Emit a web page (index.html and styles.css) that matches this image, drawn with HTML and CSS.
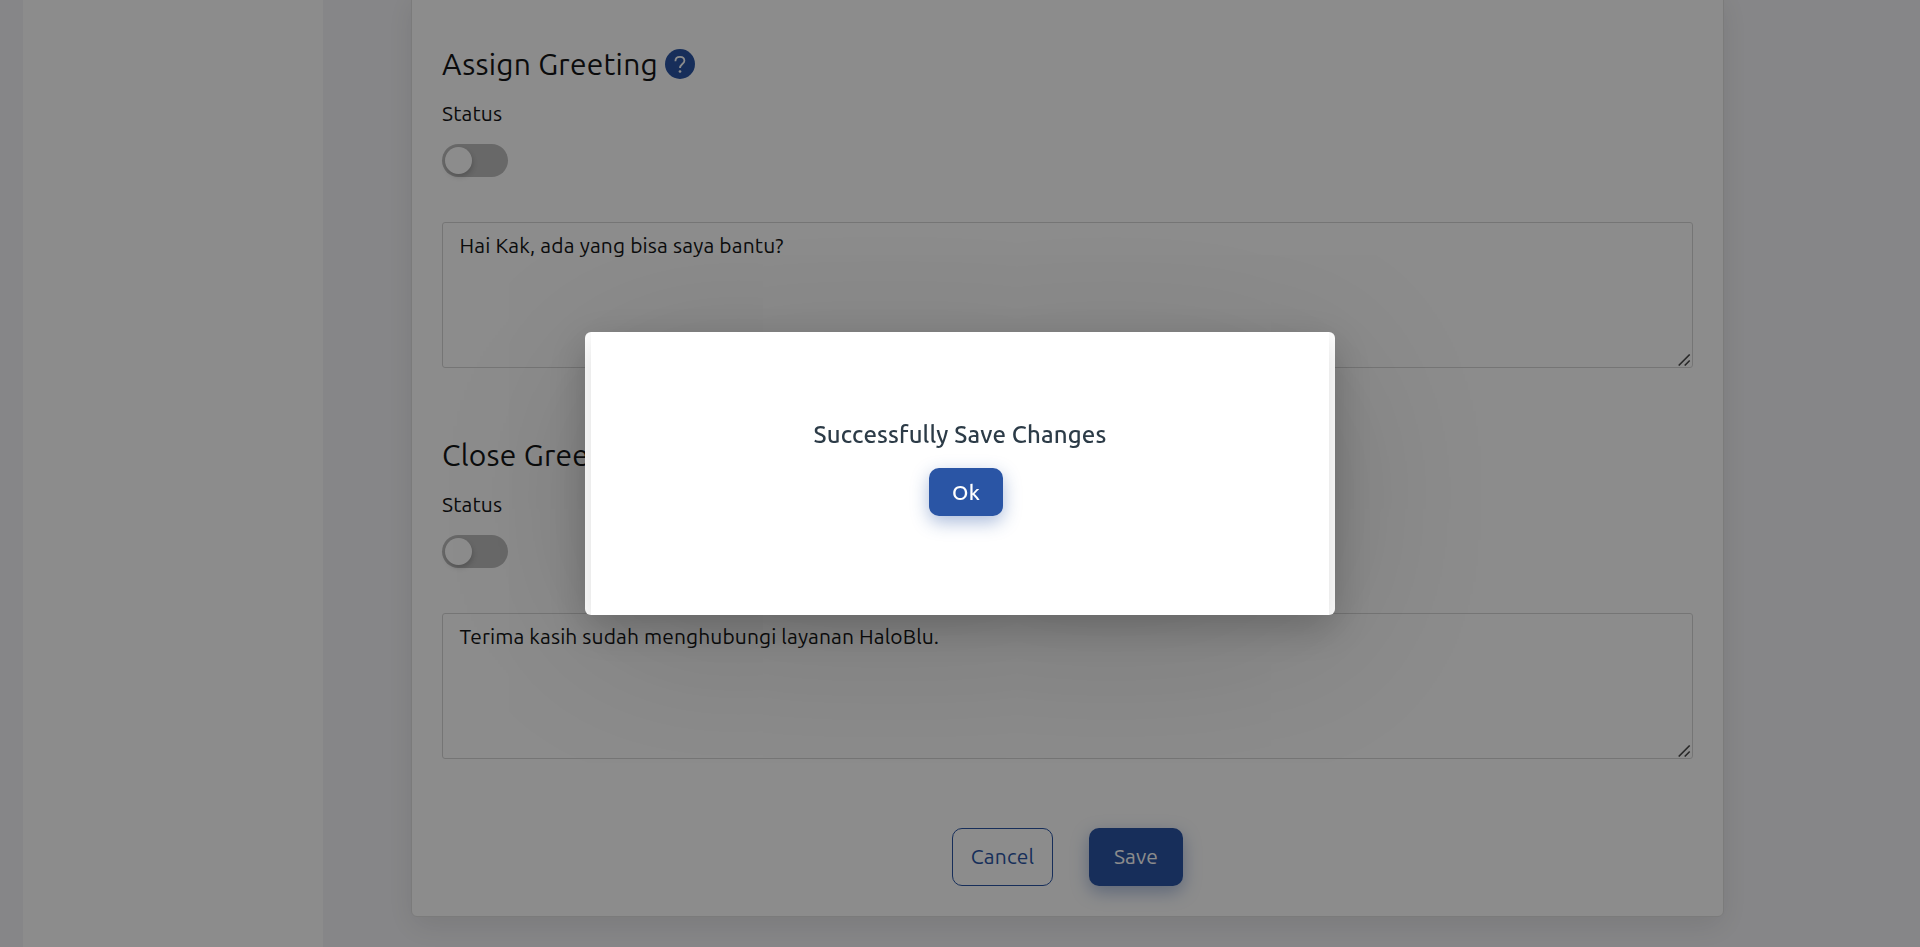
FILE: index.html
```html
<!DOCTYPE html>
<html lang="id">
<head>
<meta charset="utf-8">
<title>Greeting Settings</title>
<link rel="stylesheet" href="styles.css">
</head>
<body>
<div class="page">
  <aside class="sidebar"></aside>
  <main class="card">
    <section class="greeting">
      <h2 class="heading"><span class="heading-text">Assign Greeting</span>
        <svg class="help" viewBox="0 0 30 30"><circle cx="15" cy="15" r="15" fill="#2a55a5"/><path d="M10.4 12.2C10.4 9.4 12.2 7.9 15 7.9s4.4 1.6 4.4 3.8c0 3.2-4.4 3.5-4.4 7.3" fill="none" stroke="#fff" stroke-width="1.8"/><circle cx="15" cy="22.5" r="1.35" fill="#fff"/></svg>
      </h2>
      <span class="label">Status</span>
      <div class="toggle"><span class="knob"></span></div>
      <div class="field">
        <textarea class="message hello">Hai Kak, ada yang bisa saya bantu?</textarea>
        <svg class="grip" viewBox="0 0 13 12"><path d="M.7 11.5 11.7.5M6.7 11.5l5-5" stroke="#4a4a4a" stroke-width="1.6"/></svg>
      </div>
    </section>
    <section class="greeting">
      <h2 class="heading"><span class="heading-text">Close Greeting</span></h2>
      <span class="label">Status</span>
      <div class="toggle"><span class="knob"></span></div>
      <div class="field">
        <textarea class="message bye">Terima kasih sudah menghubungi layanan HaloBlu.</textarea>
        <svg class="grip" viewBox="0 0 13 12"><path d="M.7 11.5 11.7.5M6.7 11.5l5-5" stroke="#4a4a4a" stroke-width="1.6"/></svg>
      </div>
    </section>
    <div class="actions">
      <button class="btn cancel">Cancel</button>
      <button class="btn save">Save</button>
    </div>
  </main>
</div>
<div class="overlay">
  <div class="dialog">
    <div class="dialog-body">
      <p class="dialog-title">Successfully Save Changes</p>
      <button class="btn ok">Ok</button>
    </div>
  </div>
</div>
</body>
</html>
```
FILE: styles.css
```css
* { box-sizing: border-box; }
body { margin: 0; height: 947px; overflow: hidden; background: #f5f5f8; color: #141516; font-family: Ubuntu, "Noto Sans", sans-serif; font-size: 21px; letter-spacing: .15px; }
.page { display: flex; height: 947px; padding-left: 23px; }
.sidebar { width: 300px; background: #fff; }
.card { width: 1313px; height: 927px; margin: -10px 0 0 88px; padding: 54px 30px 0; background: #fff; border: 1px solid #e0e0e0; border-radius: 6px; box-shadow: 0 10px 30px rgba(0, 0, 0, .09); }
.greeting { height: 391px; display: flex; flex-direction: column; align-items: flex-start; }
.heading { display: flex; align-items: center; gap: 7px; height: 38px; margin: 0; font-size: 30px; font-weight: 400; line-height: 38px; letter-spacing: .25px; }
.heading-text { white-space: nowrap; }
.help { width: 30px; height: 30px; }
.label { height: 28px; margin-top: 16px; line-height: 28px; }
.toggle { width: 66px; height: 33px; margin-top: 17px; padding: 3px; border-radius: 17px; background: #bdbdbd; }
.knob { display: block; width: 27px; height: 27px; border-radius: 50%; background: #fff; box-shadow: 1px 3px 5px rgba(0, 0, 0, .18); }
.field { position: relative; margin-top: 45px; }
.grip { position: absolute; right: 2px; bottom: 2px; width: 13px; height: 12px; }
.message { display: block; width: 1251px; height: 146px; margin: 0; padding: 8px 16.5px; border: 1px solid #d6d6d6; border-radius: 3px; background: transparent; color: #141516; font: inherit; line-height: 28px; letter-spacing: .15px; resize: none; outline: 0; }
.bye { letter-spacing: .11px; }
.actions { display: flex; justify-content: center; gap: 36px; margin-top: 1px; }
.btn { padding: 0; border: 0; border-radius: 10px; background: #2a55a5; color: #fff; font: inherit; letter-spacing: .15px; box-shadow: 0 6px 18px rgba(42, 85, 165, .4); }
.cancel { width: 101px; height: 58px; padding-bottom: 2px; border: 1px solid #2a55a5; background: transparent; color: #2a55a5; box-shadow: none; }
.save { width: 94px; height: 58px; padding-bottom: 2px; }
.overlay { position: fixed; inset: 0; display: flex; align-items: center; justify-content: center; background: rgba(0, 0, 0, .45); }
.dialog { width: 750px; height: 283px; padding: 0 6px; border-radius: 6px; overflow: hidden; background: #fff; box-shadow: 0 12px 40px rgba(0, 0, 0, .22), 0 24px 190px rgba(0, 0, 0, .16); }
.dialog-body { height: 283px; padding-top: 86px; display: flex; flex-direction: column; align-items: center; background: #fff; box-shadow: 0 10px 30px rgba(0, 0, 0, .15); }
.dialog-title { margin: 0; height: 34px; color: #2c3b47; font-size: 24px; font-weight: 500; line-height: 34px; white-space: nowrap; }
.ok { width: 74px; height: 48px; margin: 16px 0 0 12px; font-weight: 500; }
```
